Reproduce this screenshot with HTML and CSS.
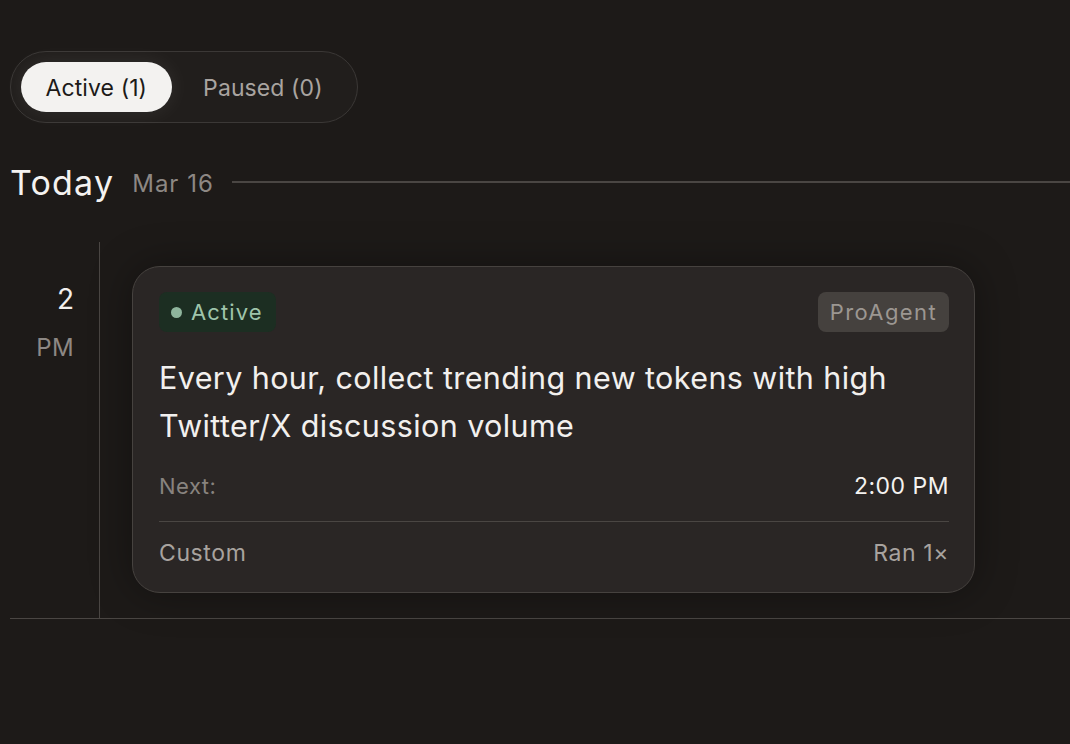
FILE: index.html
```html
<!DOCTYPE html>
<html>
<head>
<meta charset="utf-8">
<link rel="stylesheet" href="styles.css">
</head>
<body>
<div class="page">
  <div class="tabs">
    <button class="tab tab-active">Active (1)</button>
    <button class="tab">Paused (0)</button>
  </div>
  <div class="day-header">
    <span class="day-title">Today</span>
    <span class="day-date">Mar 16</span>
    <span class="day-rule"></span>
  </div>
  <div class="timeline">
    <div class="slot">
      <div class="time">
        <div class="hour">2</div>
        <div class="ampm">PM</div>
      </div>
      <div class="items">
        <div class="card">
          <div class="card-top">
            <span class="status"><span class="dot"></span>Active</span>
            <span class="agent">ProAgent</span>
          </div>
          <div class="card-title">Every hour, collect trending new tokens with high Twitter/X discussion volume</div>
          <div class="row next-row">
            <span class="label">Next:</span>
            <span class="value">2:00 PM</span>
          </div>
          <div class="row foot-row">
            <span class="muted">Custom</span>
            <span class="muted">Ran 1×</span>
          </div>
        </div>
      </div>
    </div>
  </div>
</div>
</body>
</html>
```
FILE: styles.css
```css
html, body {
  margin: 0;
  padding: 0;
  background: #1d1a18;
  height: 100%;
}
body {
  font-family: Inter, "Noto Sans", sans-serif;
  color: #f2f0ee;
}
.page {
  padding: 51px 0 0 10px;
}
.tabs {
  display: inline-flex;
  align-items: center;
  gap: 6px;
  padding: 10px 9.5px 10px 9.5px;
  border: 1.5px solid #3b3836;
  border-radius: 40px;
  background: #211e1c;
}
.tab {
  font-family: inherit;
  font-size: 23px;
  letter-spacing: 0.1px;
  height: 50px;
  padding: 2px 25px 0;
  border: none;
  border-radius: 26px;
  background: transparent;
  color: #a9a4a0;
  cursor: pointer;
}
.tab-active {
  background: #f3f2f0;
  color: #1c1a18;
  box-shadow: 0 0 22px rgba(255, 255, 255, 0.08);
}
.day-header {
  display: flex;
  align-items: center;
  margin-top: 36px;
  height: 46px;
}
.day-title {
  font-size: 34px;
  letter-spacing: 1.2px;
  color: #f4f2f0;
}
.day-date {
  font-size: 24px;
  letter-spacing: 1px;
  color: #8d8884;
  margin-left: 18px;
  padding-top: 2px;
}
.day-rule {
  flex: 1;
  height: 1.5px;
  background: #4a4643;
  margin-left: 18px;
}
.timeline {
  margin-top: 37px;
  border-bottom: 1.5px solid #4a4643;
}
.slot {
  display: flex;
}
.time {
  width: 90px;
  box-sizing: border-box;
  padding: 40px 25px 0 0;
  border-right: 1.5px solid #4a4643;
  text-align: right;
}
.hour {
  font-size: 28px;
  line-height: 34px;
  color: #f2f0ee;
}
.ampm {
  font-size: 24px;
  line-height: 30px;
  margin-top: 17px;
  letter-spacing: 0.4px;
  color: #8d8884;
}
.items {
  flex: 1;
  padding: 24px 95px 25px 32px;
}
.card {
  background: #2a2625;
  border: 1.5px solid #46423f;
  border-radius: 28px;
  padding: 25px 25px 25px 26px;
  box-shadow: 0 0 40px rgba(0, 0, 0, 0.35);
}
.card-top {
  display: flex;
  justify-content: space-between;
  align-items: center;
}
.status {
  display: inline-flex;
  align-items: center;
  gap: 9px;
  height: 40px;
  padding: 0 13px 0 12px;
  border-radius: 8px;
  background: #1c2e22;
  color: #9fc5ab;
  font-size: 22px;
  letter-spacing: 1.1px;
}
.dot {
  width: 11px;
  height: 11px;
  border-radius: 50%;
  background: #8fb59d;
}
.agent {
  display: inline-flex;
  align-items: center;
  height: 40px;
  padding: 0 12px;
  border-radius: 8px;
  background: #45413e;
  color: #9c9792;
  font-size: 22px;
  letter-spacing: 1.4px;
}
.card-title {
  margin-top: 22px;
  font-size: 30.5px;
  line-height: 48px;
  letter-spacing: 0.4px;
  color: #f2f0ee;
}
.row {
  display: flex;
  justify-content: space-between;
  align-items: center;
}
.next-row {
  margin-top: 22px;
  padding-bottom: 21px;
  border-bottom: 1.5px solid #4a4643;
}
.label {
  font-size: 22px;
  letter-spacing: 0.5px;
  color: #88837f;
}
.value {
  font-size: 23px;
  color: #f4f2f0;
  letter-spacing: 0.5px;
}
.foot-row {
  padding-top: 17px;
}
.muted {
  font-size: 23px;
  color: #a8a39f;
  letter-spacing: 0.6px;
}
```
